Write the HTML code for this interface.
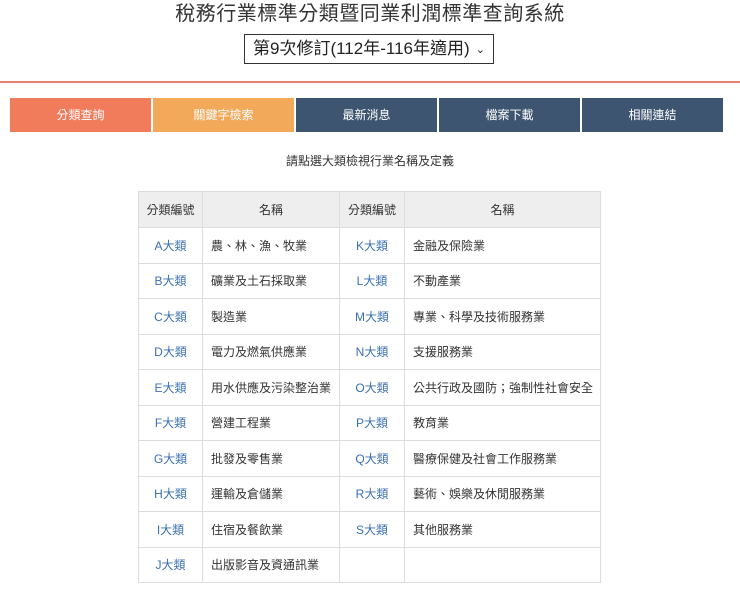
<!DOCTYPE html>
<html><head><meta charset="utf-8"><style>
body{margin:0;background:#fff;font-family:"Liberation Sans","Noto Sans CJK TC",sans-serif;color:#333;width:740px;height:591px;overflow:hidden;position:relative}
.t{position:absolute;top:0;left:0;width:740px;text-align:center;font-size:20px;line-height:28px;color:#333;letter-spacing:0.5px}
.sel{position:absolute;left:244px;top:34px;width:250px;height:30px;border:1px solid #333;box-sizing:border-box;font-size:17px;line-height:28px;padding-left:8px;color:#222}
.sel span{position:absolute;right:8px;top:1px;font-size:11px}
.line{position:absolute;top:81px;left:0;width:740px;height:2px;background:#e8806a}
.nav{position:absolute;top:98px;left:10px;display:flex}
.nav div{width:141px;height:34px;margin-right:2px;color:#fff;font-size:12px;line-height:34px;text-align:center}
.sub{position:absolute;top:152px;left:0;width:740px;text-align:center;font-size:12px;color:#333}
table{position:absolute;left:138px;top:191px;border-collapse:collapse;font-size:12px;table-layout:fixed;width:462px}
td,th{border:1px solid #ddd;height:34.5px;padding:0 8px;font-weight:normal;white-space:nowrap;overflow:visible}
th{background:#eee;height:35px;padding:0;text-align:center}
td.c{text-align:center;color:#3a6fb0;padding:0}
</style></head><body>
<div class="t">稅務行業標準分類暨同業利潤標準查詢系統</div>
<div class="sel">第9次修訂(112年-116年適用)<span>⌄</span></div>
<div class="line"></div>
<div class="nav"><div style="background:#f07c5c">分類查詢</div><div style="background:#f2a95a">關鍵字檢索</div><div style="background:#3d5570">最新消息</div><div style="background:#3d5570">檔案下載</div><div style="background:#3d5570">相關連結</div></div>
<div class="sub">請點選大類檢視行業名稱及定義</div>
<table>
<colgroup><col style="width:64px"><col style="width:137px"><col style="width:65px"><col style="width:196px"></colgroup>
<tr><th>分類編號</th><th>名稱</th><th>分類編號</th><th>名稱</th></tr>
<tr><td class="c">A大類</td><td>農、林、漁、牧業</td><td class="c">K大類</td><td>金融及保險業</td></tr>
<tr><td class="c">B大類</td><td>礦業及土石採取業</td><td class="c">L大類</td><td>不動產業</td></tr>
<tr><td class="c">C大類</td><td>製造業</td><td class="c">M大類</td><td>專業、科學及技術服務業</td></tr>
<tr><td class="c">D大類</td><td>電力及燃氣供應業</td><td class="c">N大類</td><td>支援服務業</td></tr>
<tr><td class="c">E大類</td><td>用水供應及污染整治業</td><td class="c">O大類</td><td>公共行政及國防；強制性社會安全</td></tr>
<tr><td class="c">F大類</td><td>營建工程業</td><td class="c">P大類</td><td>教育業</td></tr>
<tr><td class="c">G大類</td><td>批發及零售業</td><td class="c">Q大類</td><td>醫療保健及社會工作服務業</td></tr>
<tr><td class="c">H大類</td><td>運輸及倉儲業</td><td class="c">R大類</td><td>藝術、娛樂及休閒服務業</td></tr>
<tr><td class="c">I大類</td><td>住宿及餐飲業</td><td class="c">S大類</td><td>其他服務業</td></tr>
<tr><td class="c">J大類</td><td>出版影音及資通訊業</td><td></td><td></td></tr>
</table>
</body></html>
